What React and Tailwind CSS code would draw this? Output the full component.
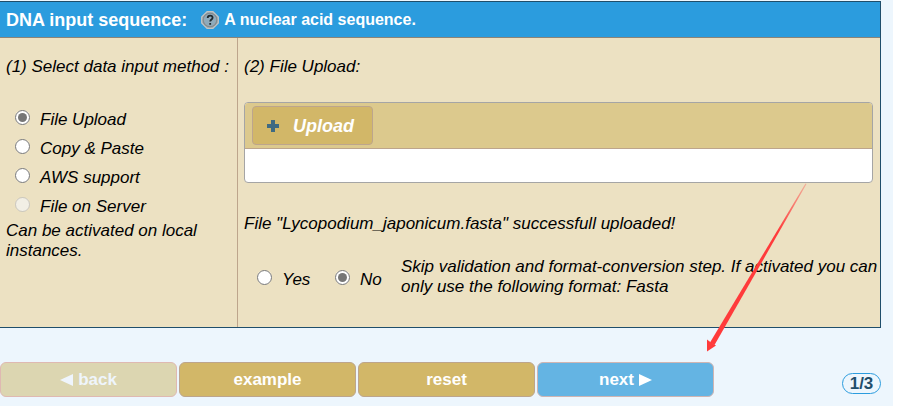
import React from "react";

function RadioOption({ id, name, label, ...rest }) {
  return (
    <div className="flex items-start gap-[10px]">
      <input
        id={id}
        type="radio"
        name={name}
        className="size-[15px] shrink-0 accent-[#767676]"
        {...rest}
      />
      <label htmlFor={id}>{label}</label>
    </div>
  );
}

function HelpIcon() {
  return (
    <svg className="size-[18px]" viewBox="0 0 18 18" aria-hidden="true">
      <path
        d="M6 .7h6L17.300 6v6L12 17.300H6L.7 12V6z"
        fill="#8fa3ae"
        stroke="#c2c4c4"
        strokeWidth="1.300"
        strokeLinejoin="round"
      />
      <circle cx="9" cy="9" r="6.800" fill="#8fabbc" stroke="#87898a" strokeWidth="1.100" />
      <path
        d="M6.700 7.100C6.700 5.500 7.600 4.600 9.100 4.600c1.500 0 2.500.8 2.500 2.100 0 1.800-2.400 1.900-2.400 3.900M9.200 12v1.800"
        fill="none"
        stroke="#20292e"
        strokeWidth="1.800"
      />
    </svg>
  );
}

function PlusIcon() {
  return (
    <svg className="size-3" viewBox="0 0 12 12" aria-hidden="true">
      <path d="M4 0h4v4h4v4H8v4H4V8H0V4h4z" fill="#3f6a82" />
    </svg>
  );
}

function Triangle({ left = false }) {
  return (
    <svg className="h-3 w-[13px]" viewBox="0 0 13 12" aria-hidden="true">
      <path d={left ? "M0 6 13 0v12z" : "M0 0 13 6 0 12z"} fill="currentColor" />
    </svg>
  );
}

const navButton =
  "flex h-[35px] w-[177px] items-center justify-center gap-[5px] rounded-md border font-bold";

function PointerArrow() {
  return (
    <svg
      className="pointer-events-none absolute left-[700px] top-[180px] h-[180px] w-[120px]"
      viewBox="0 0 120 180"
      aria-hidden="true"
    >
      <defs>
        <linearGradient id="arrowFade" x1="1" y1="0" x2="0.8" y2="0.35">
          <stop offset="0" stopColor="#ff3b3b" stopOpacity="0.3" />
          <stop offset="1" stopColor="#ff3b3b" />
        </linearGradient>
      </defs>
      <path d="M105.500 3.500 10 162.500 14.500 165 106.500 4z" fill="url(#arrowFade)" />
      <path d="M7 171.500V159.500l3.300 2.500 4 2.500 1.700 1z" fill="#ff3b3b" />
    </svg>
  );
}

export default function App() {
  return (
    <div className="min-h-screen bg-white font-['Liberation_Sans',Arial,sans-serif] text-[17px] leading-5 text-black">
      <main className="relative mr-5 bg-[#edf6fd] pb-[9px] pr-3 pt-px">
        <section className="border-y border-r border-[#1f4e6b] bg-[#ece1c2]">
          <header className="flex h-9 items-center border-b border-[#8c8478] bg-[#2b9cde] pl-[6px] font-bold text-white">
            <h1 className="text-lg">DNA input sequence:</h1>
            <button type="button" aria-label="Help" className="ml-[14px] mr-[5px]">
              <HelpIcon />
            </button>
            <p className="text-base">A nuclear acid sequence.</p>
          </header>

          <div className="flex italic">
            <fieldset className="w-[238px] shrink-0 border-r border-[#bda58c] pl-[6px] pt-[19px]">
              <legend className="float-left w-full whitespace-nowrap">(1) Select data input method :</legend>
              <div className="clear-both pt-[33px]">
                <div className="mb-1 grid gap-[9px] pl-[9px]">
                  <RadioOption id="m-upload" name="method" label="File Upload" defaultChecked />
                  <RadioOption id="m-paste" name="method" label="Copy &amp; Paste" />
                  <RadioOption id="m-aws" name="method" label="AWS support" />
                  <RadioOption id="m-server" name="method" label="File on Server" disabled />
                </div>
                <p className="pr-6">Can be activated on local instances.</p>
              </div>
            </fieldset>

            <div className="min-w-0 flex-1 pb-[30px] pl-[6px] pr-[7px] pt-[19px]">
              <h2>(2) File Upload:</h2>
              <div className="mt-[25px] overflow-hidden rounded border border-[#a5a5a5] bg-white">
                <div className="border-b border-[#bda58c] bg-[#dcc98d] px-[7px] py-[3px]">
                  <button
                    type="button"
                    className="flex h-[39px] items-center gap-[14px] rounded border border-[#bda58c] bg-[#d2b768] pl-[14px] pr-[18px] text-lg font-bold italic text-white"
                  >
                    <PlusIcon />
                    Upload
                  </button>
                </div>
                <div className="h-[33px]" />
              </div>
              <p className="mt-[31px]">File "Lycopodium_japonicum.fasta" successfull uploaded!</p>
              <fieldset className="-mr-[7px] mt-[23px] flex items-center pl-[13px]">
                <div className="mt-[6px] w-[78px] shrink-0">
                  <RadioOption id="skip-yes" name="skip" label="Yes" />
                </div>
                <div className="mt-[6px] w-[66px] shrink-0">
                  <RadioOption id="skip-no" name="skip" label="No" defaultChecked />
                </div>
                <p className="min-w-0 flex-1">
                  Skip validation and format-conversion step. If activated you can only use the following format: Fasta
                </p>
              </fieldset>
            </div>
          </div>
        </section>

        <nav className="mt-[34px] flex items-end gap-[2px]">
          <button type="button" disabled className={`${navButton} border-[#dfb9b2] bg-[#dcd6b1] text-[#eff5fc]`}>
            <Triangle left />
            back
          </button>
          <button type="button" className={`${navButton} border-[#bda58c] bg-[#d2b768] text-white`}>
            example
          </button>
          <button type="button" className={`${navButton} border-[#bda58c] bg-[#d2b768] text-white`}>
            reset
          </button>
          <button type="button" className={`${navButton} border-[#d0b5b2] bg-[#64b4e3] text-white`}>
            next
            <Triangle />
          </button>
          <span className="mb-[3px] ml-auto flex h-[21px] w-[39px] items-center justify-center rounded-full border border-[#2b9cde] font-bold text-[#1f4e6b]">
            1/3
          </span>
        </nav>

        <PointerArrow />
      </main>
    </div>
  );
}
